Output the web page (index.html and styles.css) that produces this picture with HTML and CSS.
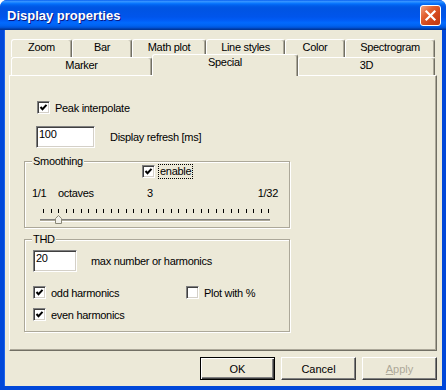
FILE: index.html
```html
<!DOCTYPE html>
<html lang="en">
<head>
    <meta charset="UTF-8">
    <title>Display properties</title>
    <link rel="stylesheet" href="styles.css">
</head>
<body>
<div class="window">
    <div class="titlebar">
        <span class="title">Display properties</span>
        <button class="close" aria-label="Close">
            <svg width="13" height="13" viewBox="0 0 13 13"><path d="M2.5 2.5 L10.5 10.5 M10.5 2.5 L2.5 10.5" stroke="#fff" stroke-width="2.2" stroke-linecap="square"/></svg>
        </button>
    </div>

    <div class="client">
        <div class="tabrow">
            <div class="tab t-zoom">Zoom</div>
            <div class="tab t-bar">Bar</div>
            <div class="tab t-math">Math plot</div>
            <div class="tab t-lines">Line styles</div>
            <div class="tab t-color">Color</div>
            <div class="tab t-spec">Spectrogram</div>
        </div>
        <div class="tabrow">
            <div class="tab t-marker">Marker</div>
            <div class="tab t-special active">Special</div>
            <div class="tab t-3d">3D</div>
        </div>

        <div class="panel">
            <div class="check-row peak">
                <span class="checkbox"><svg width="9" height="9" viewBox="0 0 9 9"><path d="M1.5 4 L3.5 6.2 L7.5 1.8" fill="none" stroke="#000" stroke-width="2"/></svg></span>
                <span>Peak interpolate</span>
            </div>

            <div class="field-row refresh">
                <span class="textbox tb-refresh">100</span>
                <span class="field-label">Display refresh [ms]</span>
            </div>

            <div class="group smoothing">
                <span class="legend">Smoothing</span>
                <div class="check-row enable">
                    <span class="checkbox"><svg width="9" height="9" viewBox="0 0 9 9"><path d="M1.5 4 L3.5 6.2 L7.5 1.8" fill="none" stroke="#000" stroke-width="2"/></svg></span>
                    <span class="focus">enable</span>
                </div>
                <div class="scale">
                    <span class="lo">1/1</span>
                    <span class="unit">octaves</span>
                    <span class="mid">3</span>
                    <span class="hi">1/32</span>
                </div>
                <div class="ticks">
                    <i></i><i></i><i></i><i></i><i></i><i></i><i></i><i></i><i></i><i></i>
                    <i></i><i></i><i></i><i></i><i></i><i></i><i></i><i></i><i></i><i></i>
                    <i></i><i></i><i></i><i></i><i></i><i></i><i></i><i></i><i></i><i></i>
                    <i></i>
                </div>
                <div class="slider">
                    <div class="track"></div>
                    <svg class="thumb" width="7" height="9" viewBox="0 0 7 9">
                        <path d="M0.5 8.5 V3.5 L3.5 0.5 L6.5 3.5 V8.5 Z" fill="#f2f1ea" stroke="#8a8878"/>
                    </svg>
                </div>
            </div>

            <div class="group thd">
                <span class="legend">THD</span>
                <div class="field-row harmonics">
                    <span class="textbox tb-harm">20</span>
                    <span class="field-label">max number or harmonics</span>
                </div>
                <div class="check-line">
                    <div class="check-row odd">
                        <span class="checkbox"><svg width="9" height="9" viewBox="0 0 9 9"><path d="M1.5 4 L3.5 6.2 L7.5 1.8" fill="none" stroke="#000" stroke-width="2"/></svg></span>
                        <span>odd harmonics</span>
                    </div>
                    <div class="check-row">
                        <span class="checkbox"></span>
                        <span>Plot with %</span>
                    </div>
                </div>
                <div class="check-row even">
                    <span class="checkbox"><svg width="9" height="9" viewBox="0 0 9 9"><path d="M1.5 4 L3.5 6.2 L7.5 1.8" fill="none" stroke="#000" stroke-width="2"/></svg></span>
                    <span>even harmonics</span>
                </div>
            </div>
        </div>

        <div class="buttons">
            <button class="btn default">OK</button>
            <button class="btn">Cancel</button>
            <button class="btn disabled"><u>A</u>pply</button>
        </div>
    </div>
</div>
</body>
</html>
```

FILE: styles.css
```css
body {
    margin: 0;
    font-family: "Liberation Sans", Arial, sans-serif;
    font-size: 11px;
    letter-spacing: -0.3px;
    color: #000;
    background: #fff;
}

.window {
    width: 446px;
    height: 390px;
    display: flex;
    flex-direction: column;
    border-radius: 7px 7px 0 0;
    overflow: hidden;
    background: #0047d9;
}

/* title bar */
.titlebar {
    flex: none;
    height: 30px;
    display: flex;
    align-items: center;
    padding: 0 5px 0 7px;
    background: linear-gradient(to bottom, #0058ee 0%, #3a93ff 4%, #288eff 7%, #127dff 10%, #036ffc 13%, #0262ee 17%, #0057e5 23%, #0054e3 30%, #0055eb 56%, #005bf5 66%, #026afe 76%, #0062ef 86%, #0052d6 92%, #0040ab 96%, #003092 100%);
}

.title {
    color: #fff;
    font-weight: bold;
    font-size: 13px;
    letter-spacing: 0;
    padding-top: 1px;
    text-shadow: 1px 1px #0a1883;
}

.close {
    margin-left: auto;
    width: 21px;
    height: 21px;
    padding: 0;
    display: flex;
    align-items: center;
    justify-content: center;
    border: 1px solid #fff;
    border-radius: 3px;
    background: linear-gradient(135deg, #f0a283 0%, #e2602f 35%, #d1451a 65%, #c0380f 100%);
}

/* client area */
.client {
    flex: 1;
    background: #ece9d8;
    border: 4px solid #0047d9;
    border-top: 0;
    padding-top: 9px;
    box-shadow: inset 1px 0 #1b62ec;
}

.tabrow {
    display: flex;
    align-items: flex-start;
    height: 18px;
    margin-left: 7px;
}

.tab {
    box-sizing: border-box;
    height: 18px;
    border: 1px solid;
    border-bottom: 0;
    border-color: #fff #716f64 #fff #fff;
    border-radius: 3px 3px 0 0;
    box-shadow: inset -1px 0 #aca899;
    background: #ece9d8;
    text-align: center;
    line-height: 15px;
}

.t-zoom { width: 61px; }
.t-bar { width: 60px; }
.t-math { width: 74px; }
.t-lines { width: 79px; }
.t-color { width: 60px; }
.t-spec { width: 90px; }
.t-marker { width: 141px; }
.t-special { width: 146px; }
.t-3d { width: 137px; }

.tab.active {
    height: 22px;
    margin-top: -3px;
    margin-bottom: -1px;
    position: relative;
    z-index: 1;
}

.panel {
    box-sizing: border-box;
    width: 428px;
    height: 276px;
    margin-left: 5px;
    padding: 25px 0 0 14px;
    border: 1px solid;
    border-color: #fff #716f64 #716f64 #fff;
    box-shadow: inset -1px -1px #aca899;
}

/* checkboxes */
.check-row {
    display: flex;
    align-items: center;
    height: 13px;
}

.checkbox {
    box-sizing: border-box;
    width: 13px;
    height: 13px;
    flex: none;
    display: flex;
    align-items: center;
    justify-content: center;
    margin-right: 5px;
    background: #fff;
    border: 1px solid;
    border-color: #808080 #fff #fff #808080;
    box-shadow: inset 1px 1px #404040, inset -1px -1px #d4d0c8;
}

.peak {
    margin-left: 13px;
}

/* text fields */
.field-row {
    display: flex;
    align-items: center;
}

.textbox {
    box-sizing: border-box;
    height: 22px;
    padding-left: 2px;
    line-height: 15px;
    background: #fff;
    border: 1px solid;
    border-color: #808080 #fff #fff #808080;
    box-shadow: inset 1px 1px #404040, inset -1px -1px #d4d0c8;
}

.refresh {
    margin: 12px 0 0 12px;
}

.tb-refresh {
    width: 59px;
}

.refresh .field-label {
    margin-left: 15px;
}

/* group boxes */
.group {
    box-sizing: border-box;
    width: 266px;
    border: 1px solid #aca899;
    box-shadow: inset 1px 1px #fff, 1px 1px #fff;
}

.legend {
    display: table;
    margin: -7px 0 0 7px;
    padding: 0 1px;
    line-height: 13px;
    background: #ece9d8;
}

.smoothing {
    margin-top: 13px;
    padding-bottom: 4px;
}

.smoothing .legend {
    margin-bottom: -3px;
}

.enable {
    margin-left: 117px;
}

.enable .checkbox {
    margin-right: 3px;
}

.focus {
    border: 1px dotted #000;
    padding: 0 1px;
    line-height: 13px;
}

.scale {
    display: flex;
    margin-top: 9px;
    padding: 0 11px 0 7px;
    line-height: 13px;
}

.lo { width: 26px; }
.unit { width: 89px; }
.hi { margin-left: auto; }

.ticks {
    display: flex;
    justify-content: space-between;
    width: 226px;
    height: 4px;
    margin: 9px 0 0 18px;
}

.ticks i {
    width: 1px;
    background: #000;
}

.slider {
    position: relative;
    height: 4px;
    padding-top: 4px;
    margin-top: 2px;
}

.track {
    width: 230px;
    height: 1px;
    margin-left: 15px;
    border-top: 1px solid #808080;
    border-bottom: 1px solid #fff;
    background: #aca899;
}

.thumb {
    position: absolute;
    left: 30px;
    top: 0;
}

.thd {
    margin-top: 11px;
    padding-bottom: 10px;
}

.harmonics {
    margin: 4px 0 0 8px;
}

.tb-harm {
    width: 44px;
}

.harmonics .field-label {
    margin-left: 14px;
}

.check-line {
    display: flex;
    margin: 14px 0 0 8px;
}

.odd {
    width: 153px;
}

.even {
    margin: 9px 0 0 8px;
}

/* dialog buttons */
.buttons {
    display: flex;
    justify-content: flex-end;
    gap: 6px;
    margin-top: 6px;
    padding-right: 5px;
}

.btn {
    box-sizing: border-box;
    width: 75px;
    height: 23px;
    padding: 0;
    font: inherit;
    color: #000;
    background: #ece9d8;
    border: 1px solid;
    border-color: #fff #404040 #404040 #fff;
    box-shadow: inset -1px -1px #808080;
}

.btn.default {
    border-color: #000;
    box-shadow: inset 1px 1px #fff, inset -1px -1px #404040, inset -2px -2px #808080;
}

.btn.disabled {
    color: #aca899;
}
```
